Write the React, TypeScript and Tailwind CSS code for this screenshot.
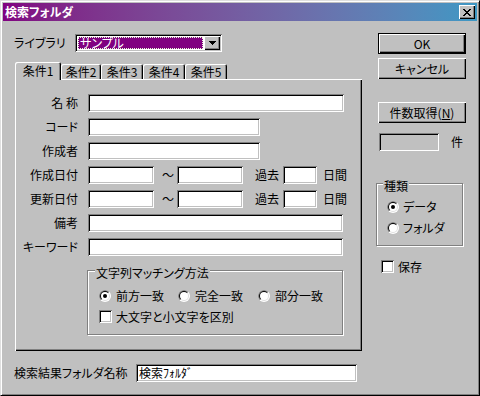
const raised = 'bg-[#c0c0c0] shadow-[inset_1px_1px_0_#fff,inset_-1px_-1px_0_#000,inset_-2px_-2px_0_#808080]'
const sunken = 'shadow-[inset_1px_1px_0_#808080,inset_-1px_-1px_0_#fff,inset_2px_2px_0_#000,inset_-2px_-2px_0_#c0c0c0]'
const etched = 'border border-[#808080] shadow-[inset_1px_1px_0_#fff,1px_1px_0_#fff]'
const tabShadow = 'shadow-[inset_1px_1px_0_#fff,inset_-1px_0_0_#000,inset_-2px_0_0_#808080]'

function Field({ w, value = '', gray = false }: { w: string; value?: string; gray?: boolean }) {
	return (
		<div className={`h-[18px] ${w} ${gray ? 'bg-[#c0c0c0]' : 'bg-white'} ${sunken} pl-[3px] flex items-center`}>
			{value}
		</div>
	)
}

function Radio({ checked = false }: { checked?: boolean }) {
	return (
		<svg width="12" height="12" viewBox="0 0 12 12" className="shrink-0">
			<defs>
				<clipPath id="radio-tl">
					<polygon points="0,0 12,0 0,12" />
				</clipPath>
			</defs>
			<circle cx="6" cy="6" r="6" fill="#fff" />
			<circle cx="6" cy="6" r="6" fill="#808080" clipPath="url(#radio-tl)" />
			<circle cx="6" cy="6" r="5" fill="#dfdfdf" />
			<circle cx="6" cy="6" r="5" fill="#000" clipPath="url(#radio-tl)" />
			<circle cx="6" cy="6" r="4" fill="#fff" />
			{checked && <circle cx="6" cy="6" r="2" fill="#000" />}
		</svg>
	)
}

function Check() {
	return <div className={`w-[13px] h-[13px] shrink-0 bg-white ${sunken}`} />
}

function Row({ label, children }: { label: string; children: React.ReactNode }) {
	return (
		<div className="flex items-center h-[18px]">
			<div className="w-[63px] text-right whitespace-pre">{label}</div>
			<div className="ml-[10px] flex items-center">{children}</div>
		</div>
	)
}

function DateRow({ label }: { label: string }) {
	return (
		<Row label={label}>
			<Field w="w-[66px]" />
			<span className="ml-[8px]">〜</span>
			<div className="ml-[3px]">
				<Field w="w-[66px]" />
			</div>
			<span className="ml-[12px]">過去</span>
			<div className="ml-[4px]">
				<Field w="w-[34px]" />
			</div>
			<span className="ml-[6px]">日間</span>
		</Row>
	)
}

export default function App() {
	return (
		<div className="w-[480px] h-[396px] bg-[#c0c0c0] text-[12px] leading-[12px] text-black font-['Noto_Sans_CJK_JP',sans-serif] [font-feature-settings:'palt'] border border-t-[#dfdfdf] border-l-[#dfdfdf] border-r-black border-b-black shadow-[inset_1px_1px_0_#fff,inset_-1px_-1px_0_#808080] p-[2px] flex flex-col">
			{/* title bar */}
			<div className="h-[18px] flex items-center px-[2px] bg-linear-to-r from-[#800080] to-[#3c98c4]">
				<span className="text-white font-bold">検索フォルダ</span>
				<div className={`ml-auto w-[16px] h-[14px] ${raised} flex items-center justify-center`}>
					<svg width="8" height="7" viewBox="0 0 8 7" shapeRendering="crispEdges">
						<path
							d="M0 0h2v1H0zM6 0h2v1H6zM1 1h2v1H1zM5 1h2v1H5zM2 2h4v1H2zM3 3h2v1H3zM2 4h4v1H2zM1 5h2v1H1zM5 5h2v1H5zM0 6h2v1H0zM6 6h2v1H6z"
							fill="#000"
						/>
					</svg>
				</div>
			</div>

			<div className="flex pl-[11px]">
				{/* left column */}
				<div className="flex flex-col w-[348px] pt-[13px]">
					<div className="flex items-center h-[18px]">
						<div className="w-[61px]">ライブラリ</div>
						<div className={`w-[147px] h-[18px] bg-white ${sunken} p-[2px] flex`}>
							<div className="flex-1 m-[1px] bg-[#800080] text-white border border-dotted border-[#e8ffd8] pl-[1px] flex items-center">
								サンプル
							</div>
							<div className={`w-[16px] h-[14px] ${raised} flex items-center justify-center`}>
								<svg width="7" height="4" viewBox="0 0 7 4" shapeRendering="crispEdges">
									<path d="M0 0h7v1H0zM1 1h5v1H1zM2 2h3v1H2zM3 3h1v1H3z" fill="#000" />
								</svg>
							</div>
						</div>
					</div>

					{/* tabs */}
					<div className="flex mt-[10px] h-[17px] ml-[1px]">
						<div className={`relative z-10 w-[46px] h-[18px] bg-[#c0c0c0] ${tabShadow} rounded-t-[2px] flex items-center justify-center`}>
							条件1
						</div>
						<div className={`w-[40px] h-[15px] mt-[2px] bg-[#c0c0c0] ${tabShadow} rounded-t-[2px] flex items-center justify-center`}>
							条件2
						</div>
						<div className={`w-[42px] h-[15px] mt-[2px] bg-[#c0c0c0] ${tabShadow} rounded-t-[2px] flex items-center justify-center`}>
							条件3
						</div>
						<div className={`w-[42px] h-[15px] mt-[2px] bg-[#c0c0c0] ${tabShadow} rounded-t-[2px] flex items-center justify-center`}>
							条件4
						</div>
						<div className={`w-[42px] h-[15px] mt-[2px] bg-[#c0c0c0] ${tabShadow} rounded-t-[2px] flex items-center justify-center`}>
							条件5
						</div>
					</div>

					{/* panel */}
					<div className={`ml-[1px] w-[347px] h-[272px] ${raised} flex flex-col pt-[15px]`}>
						<div className="flex flex-col gap-[6px]">
							<Row label="名 称">
								<Field w="w-[256px]" />
							</Row>
							<Row label="コード">
								<Field w="w-[172px]" />
							</Row>
							<Row label="作成者">
								<Field w="w-[172px]" />
							</Row>
							<DateRow label="作成日付" />
							<DateRow label="更新日付" />
							<Row label="備考">
								<Field w="w-[255px]" />
							</Row>
							<Row label="キーワード">
								<Field w="w-[255px]" />
							</Row>
						</div>

						<div className={`mt-[14px] ml-[72px] w-[256px] h-[65px] ${etched} flex flex-col`}>
							<div className="-mt-[4px] ml-[7px] px-[1px] bg-[#c0c0c0] w-fit">文字列マッチング方法</div>
							<div className="flex items-center h-[14px] mt-[10px] pl-[11px]">
								<Radio checked />
								<span className="ml-[5px]">前方一致</span>
								<div className="ml-[14px]">
									<Radio />
								</div>
								<span className="ml-[5px]">完全一致</span>
								<div className="ml-[15px]">
									<Radio />
								</div>
								<span className="ml-[5px]">部分一致</span>
							</div>
							<div className="flex items-center h-[13px] mt-[7px] pl-[11px]">
								<Check />
								<span className="ml-[4px]">大文字と小文字を区別</span>
							</div>
						</div>
					</div>

					<div className="flex items-center mt-[13px] h-[18px]">
						<div className="w-[122px]">検索結果フォルダ名称</div>
						<Field w="w-[221px]" value="検索ﾌｫﾙﾀﾞ" />
					</div>
				</div>

				{/* right column */}
				<div className="flex flex-col ml-[16px] w-[88px] pt-[12px]">
					<div className="h-[21px] border border-black bg-[#c0c0c0] shadow-[inset_1px_1px_0_#fff,inset_-1px_-1px_0_#000,inset_-2px_-2px_0_#808080] flex items-center justify-center">
						OK
					</div>
					<div className={`mt-[4px] h-[21px] ${raised} flex items-center justify-center`}>キャンセル</div>
					<div className={`mt-[23px] h-[21px] ${raised} flex items-center justify-center`}>
						件数取得(<span className="underline">N</span>)
					</div>
					<div className="mt-[10px] flex items-center h-[18px]">
						<div className="ml-[1px]">
							<Field w="w-[60px]" gray />
						</div>
						<span className="ml-[12px]">件</span>
					</div>
					<div className={`mt-[32px] -ml-[2px] w-[87px] h-[63px] ${etched} flex flex-col`}>
						<div className="-mt-[4px] ml-[6px] px-[1px] bg-[#c0c0c0] w-fit">種類</div>
						<div className="flex items-center h-[14px] mt-[8px] pl-[10px]">
							<Radio checked />
							<span className="ml-[4px]">データ</span>
						</div>
						<div className="flex items-center h-[14px] mt-[7px] pl-[10px]">
							<Radio />
							<span className="ml-[4px]">フォルダ</span>
						</div>
					</div>
					<div className="flex items-center mt-[14px] ml-[3px] h-[13px]">
						<Check />
						<span className="ml-[4px]">保存</span>
					</div>
				</div>
			</div>
		</div>
	)
}
